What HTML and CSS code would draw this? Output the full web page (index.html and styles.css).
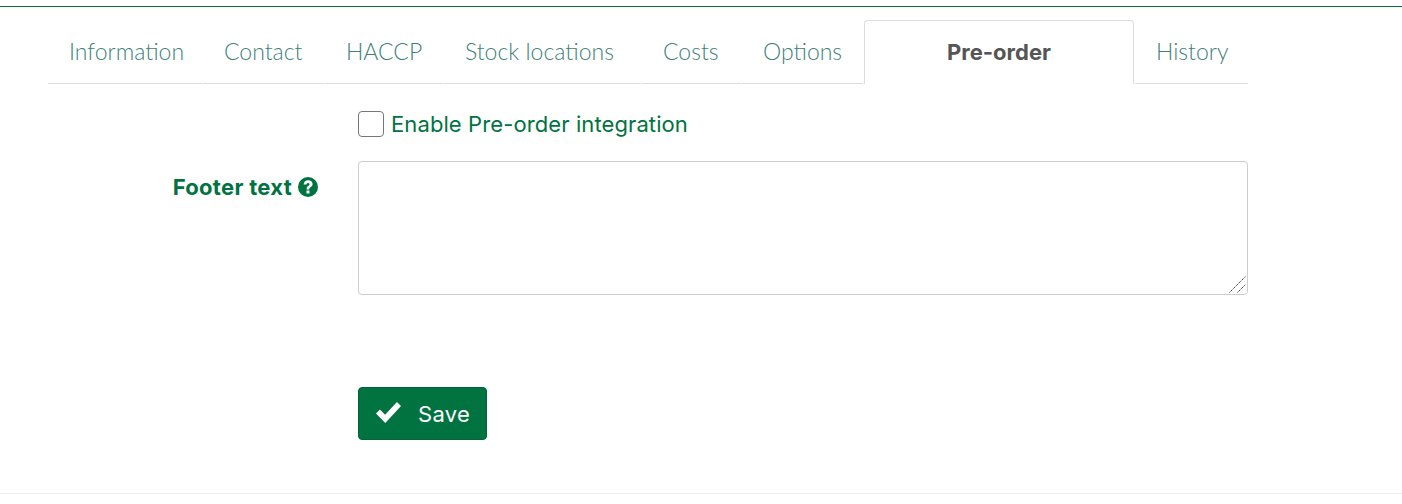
FILE: index.html
```html
<!DOCTYPE html>
<html lang="en">
<head>
<meta charset="utf-8">
<title>Pre-order</title>
<link rel="stylesheet" href="styles.css">
</head>
<body>
<div class="topline"></div>
<main class="panel">
  <nav class="tabs">
    <a class="tab">Information</a>
    <a class="tab">Contact</a>
    <a class="tab">HACCP</a>
    <a class="tab">Stock locations</a>
    <a class="tab">Costs</a>
    <a class="tab">Options</a>
    <a class="tab active">Pre-order</a>
    <a class="tab">History</a>
  </nav>
  <form class="form">
    <div class="cell-check">
      <label class="check"><input type="checkbox" class="box"><span>Enable Pre-order integration</span></label>
    </div>
    <label class="label">Footer text
      <svg class="help" viewBox="0 0 20 20" aria-hidden="true"><circle cx="10" cy="10" r="10" fill="#007341"/><path d="M5.600 7.400C5.800 4.700 7.700 3.200 10.200 3.200c2.600 0 4.400 1.500 4.400 3.700 0 1.700-1 2.600-2.200 3.400-.9.600-1.100.9-1.100 1.600v.5H8.600v-.8c0-1.300.6-2 1.600-2.700.9-.6 1.300-1 1.300-1.600 0-.7-.6-1.200-1.400-1.200-.9 0-1.500.6-1.600 1.400z" fill="#fff"/><rect x="8.500" y="13.400" width="3" height="3" rx=".3" fill="#fff"/></svg>
    </label>
    <div class="area-wrap">
      <textarea class="area"></textarea>
      <svg class="grip" viewBox="0 0 17 17" aria-hidden="true"><path d="M.5 16.500 16.500.5M8.500 16.500l8-8" stroke="#333" stroke-width="1" stroke-dasharray="1.400 .8" fill="none"/></svg>
    </div>
    <div class="cell-save">
      <button type="button" class="save">
        <svg class="tick" viewBox="0 0 25 21" aria-hidden="true"><path d="M0 11.500 3.900 7.600 9.100 12.800 20.900 0 25 4.100 9.300 21z" fill="#fff"/></svg>
        <span>Save</span>
      </button>
    </div>
  </form>
  <div class="rule"></div>
</main>
</body>
</html>
```
FILE: styles.css
```css
* { box-sizing: border-box; }
html, body { margin: 0; padding: 0; background: #fff; }
body { height: 504px; overflow: hidden; font-family: "Inter", "Noto Sans", sans-serif; padding-top: 6px; }
.topline { height: 1px; background: #007341; }
.panel { display: flex; flex-direction: column; }
.tabs {
  margin: 13px 0 0 48px;
  width: 1200px;
  height: 64px;
  display: grid;
  grid-template-columns: 154px 121px 118px 197px 99px 121px 270px 113px;
  column-gap: 1px;
}
.tab {
  display: flex;
  align-items: center;
  padding: 0 0 1px 21px;
  border-bottom: 1px solid #ddd;
  font-family: "Lato", sans-serif;
  font-weight: 300;
  font-size: 23px;
  color: #3f7f7a;
  white-space: nowrap;
}
.tab.active {
  justify-content: center;
  padding: 0 0 1px;
  border: 1px solid #ddd;
  border-bottom: 0;
  border-radius: 4px 4px 0 0;
  font-family: "Inter", sans-serif;
  font-weight: 700;
  font-size: 22px;
  color: #555;
}
.form {
  display: grid;
  grid-template-columns: 270px 890px;
  column-gap: 40px;
  margin-left: 48px;
  width: 1200px;
}
.cell-check { grid-column: 2; height: 77px; padding-top: 27px; }
.check { display: flex; align-items: center; color: #007341; font-size: 22px; letter-spacing: .1px; line-height: 26px; }
.box {
  appearance: none;
  width: 26px;
  height: 26px;
  margin: 0 7px 0 0;
  border: 1px solid #767676;
  border-radius: 4px;
  background: #fff;
}
.label {
  display: flex;
  align-items: flex-start;
  justify-content: flex-end;
  gap: 6px;
  padding-top: 13px;
  color: #007341;
  font-weight: 700;
  font-size: 22px;
  letter-spacing: .3px;
  line-height: 26px;
}
.help { width: 20px; height: 20px; margin-top: 3px; flex: none; }
.area-wrap { position: relative; width: 890px; height: 134px; }
.area {
  display: block;
  width: 100%;
  height: 100%;
  border: 1px solid #ccc;
  border-radius: 4px;
  padding: 6px 12px;
  margin: 0;
  resize: none;
  background: #fff;
}
.grip { position: absolute; right: 2px; bottom: 2px; width: 17px; height: 17px; }
.cell-save { grid-column: 2; padding-top: 92px; }
.save {
  display: flex;
  align-items: center;
  width: 129px;
  height: 53px;
  padding: 0 0 0 17px;
  background: #007341;
  border: 1px solid #00643a;
  border-radius: 4px;
  color: #fff;
  font-family: "Inter", sans-serif;
  font-size: 22px;
  letter-spacing: .3px;
}
.save span { padding-top: 1px; }
.tick { width: 25px; height: 21px; margin-right: 17px; margin-top: -3px; flex: none; }
.rule { margin-top: 53px; height: 1px; background: #eee; }
```
